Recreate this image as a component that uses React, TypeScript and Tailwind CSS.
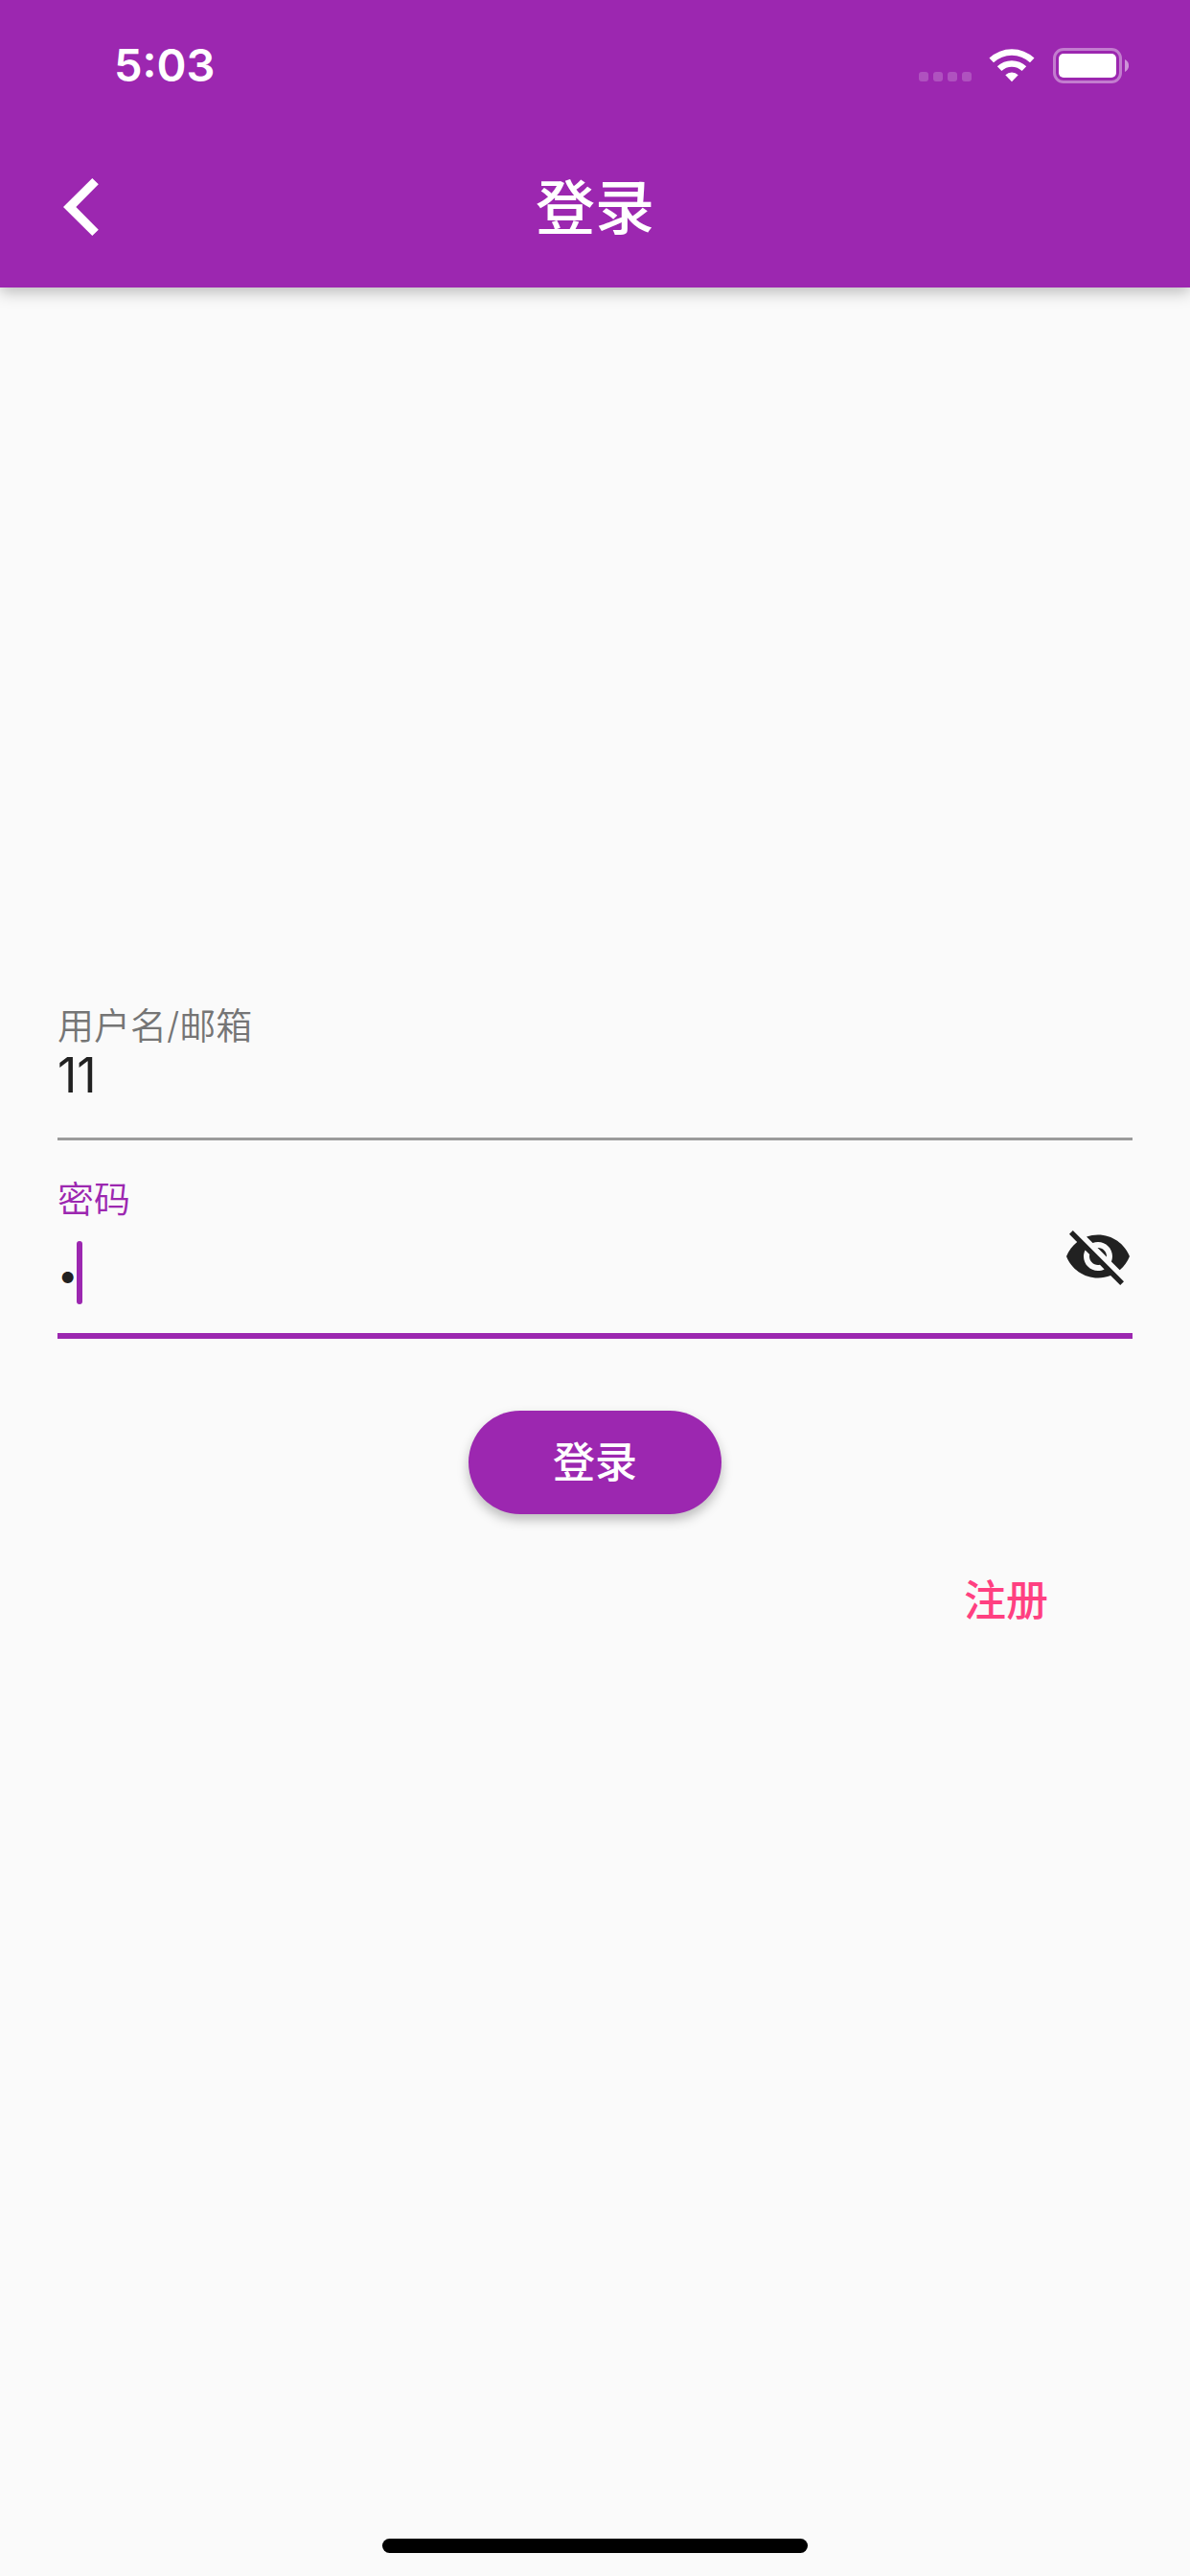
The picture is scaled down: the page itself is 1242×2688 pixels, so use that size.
import { useState } from "react";

function WifiIcon() {
  return (
    <svg viewBox="0 0 48 36" className="h-9 w-12" fill="#fff" aria-hidden="true">
      <path d="M0.5 10.5A34.5 34.5 0 0 1 47.5 10.5L43 15.2A28 28 0 0 0 5 15.2Z" />
      <path d="M8.8 19.3A22 22 0 0 1 39.2 19.3L34.6 24A15.4 15.4 0 0 0 13.4 24Z" />
      <path d="M17.3 28.2A9.8 9.8 0 0 1 30.7 28.2L24 35.3Z" />
    </svg>
  );
}

function BatteryIcon() {
  return (
    <svg viewBox="0 0 79 37" className="h-[37px] w-[79px]" fill="none" aria-hidden="true">
      <rect x="1.5" y="1.5" width="69" height="34" rx="9.5" stroke="#fff" strokeOpacity="0.4" strokeWidth="3" />
      <rect x="6" y="6" width="60" height="25" rx="5" fill="#fff" />
      <path d="M75 12C80.500 14.500 80.500 22.500 75 25Z" fill="#fff" fillOpacity="0.5" />
    </svg>
  );
}

function StatusBar() {
  return (
    <div className="flex h-33 items-center justify-between pt-1 pr-16 pl-[119px]">
      <span className="text-[47px] leading-[60px] font-semibold">5:03</span>
      <div className="flex items-center">
        <div className="mt-6 mr-[18px] flex gap-[5px]">
          {[0, 1, 2, 3].map((n) => (
            <span key={n} className="size-[10px] rounded-[3px] bg-white/20" />
          ))}
        </div>
        <WifiIcon />
        <div className="ml-[19px]">
          <BatteryIcon />
        </div>
      </div>
    </div>
  );
}

function VisibilityOffIcon() {
  return (
    <svg viewBox="0 0 24 24" className="size-18" fill="#212121" aria-hidden="true">
      <path d="M12 7c2.760 0 5 2.240 5 5 0 .65-.13 1.260-.36 1.830l2.920 2.920c1.510-1.260 2.700-2.890 3.430-4.750-1.730-4.390-6-7.500-11-7.500-1.400 0-2.740.25-3.980.7l2.160 2.160C10.740 7.130 11.350 7 12 7zM2 4.270l2.280 2.280.46.46C3.080 8.300 1.780 10.020 1 12c1.730 4.390 6 7.500 11 7.500 1.550 0 3.030-.3 4.380-.84l.42.42L19.730 22 21 20.730 3.270 3 2 4.270zM7.530 9.800l1.550 1.550c-.05.21-.08.43-.08.65 0 1.660 1.340 3 3 3 .22 0 .44-.03.65-.08l1.550 1.550c-.67.33-1.410.53-2.200.53-2.760 0-5-2.240-5-5 0-.79.2-1.530.53-2.200zm4.310-.78l3.150 3.150.02-.16c0-1.660-1.340-3-3-3l-.17.01z" />
    </svg>
  );
}

export default function App() {
  const [user, setUser] = useState("11");
  const [password, setPassword] = useState("1");
  const [hidden, setHidden] = useState(true);

  return (
    <div className="flex min-h-screen flex-col bg-[#fafafa] font-['Inter','Noto_Sans_CJK_SC',sans-serif] text-[#212121]">
      <header className="bg-[#9c27b0] text-white shadow-[0_5px_15px_rgba(0,0,0,0.25)]">
        <StatusBar />
        <div className="grid h-42 grid-cols-[1fr_auto_1fr] items-center px-12">
          <button type="button" aria-label="返回" className="flex size-18 items-center pl-[18px]">
            <svg viewBox="0 0 37 60" className="h-[60px] w-[37px]" fill="#fff" aria-hidden="true">
              <path d="M30.300 0L36.800 6.300L13.300 30L36.800 53.700L30.300 60L0 30Z" />
            </svg>
          </button>
          <h1 className="pt-1 text-[62px] leading-[84px] font-medium">登录</h1>
        </div>
      </header>

      <main className="flex flex-1 flex-col justify-center px-15 pb-[158px]">
        <form className="flex flex-col" onSubmit={(e) => e.preventDefault()}>
          <div className="flex flex-col border-b-3 border-[#9b9b9b] pb-[37px]">
            <label htmlFor="user" className="text-[38px] leading-[48px] font-[350] text-[#757575]">
              用户名/邮箱
            </label>
            <input
              id="user"
              value={user}
              onChange={(e) => setUser(e.target.value)}
              className="h-14 w-full bg-transparent text-[50px] outline-none"
            />
          </div>

          <div className="mt-[37px] flex flex-col border-b-6 border-[#9c27b0]">
            <label htmlFor="password" className="text-[38px] leading-[48px] font-[350] text-[#9c27b0]">
              密码
            </label>
            <div className="flex h-29 items-start">
              <div className="relative mt-5 flex-1">
                <input
                  id="password"
                  type={hidden ? "password" : "text"}
                  value={password}
                  onChange={(e) => setPassword(e.target.value)}
                  className="h-[66px] w-full bg-transparent pt-1 text-[38px] caret-transparent outline-none"
                />
                <span className="absolute top-0 left-5 h-[66px] w-[6px] rounded-full bg-[#9c27b0]" />
              </div>
              <button type="button" aria-label="显示密码" onClick={() => setHidden(!hidden)}>
                <VisibilityOffIcon />
              </button>
            </div>
          </div>

          <button
            type="submit"
            className="mt-[75px] h-27 w-66 self-center rounded-full bg-[#9c27b0] text-[44px] font-medium text-white shadow-[0_6px_12px_rgba(0,0,0,0.25)]"
          >
            登录
          </button>
          <button type="button" className="mt-9 h-27 w-66 self-end text-[44px] font-medium text-[#ff4081]">
            注册
          </button>
        </form>
      </main>

      <footer className="flex justify-center pt-[21px] pb-6">
        <span className="h-[15px] w-111 rounded-full bg-black" />
      </footer>
    </div>
  );
}
